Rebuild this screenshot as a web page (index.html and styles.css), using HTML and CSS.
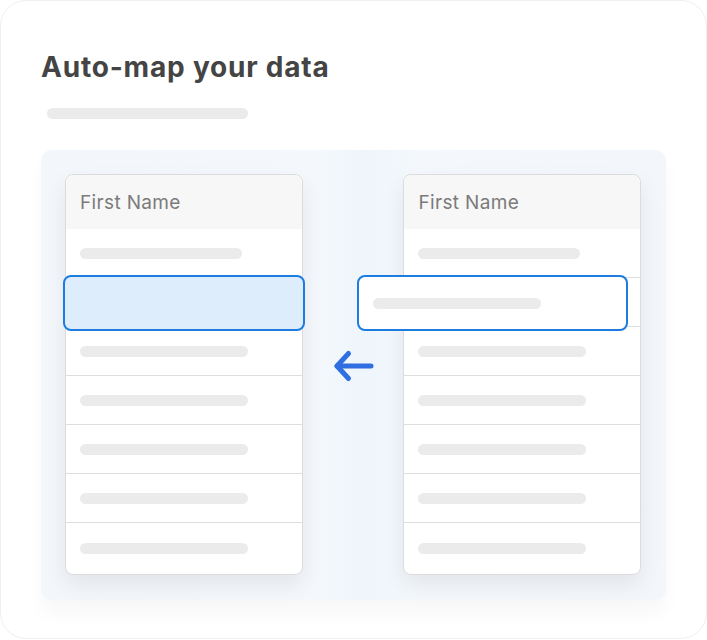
FILE: index.html
```html
<!DOCTYPE html>
<html lang="en">
<head>
<meta charset="utf-8">
<title>Auto-map your data</title>
<link rel="stylesheet" href="styles.css">
</head>
<body>
<div class="card">
  <h1 class="title">Auto-map your data</h1>
  <div class="subtitle-bar"></div>
  <div class="panel">
    <div class="table table-left">
      <div class="thead">First Name</div>
      <div class="row"><span class="bar bar-short"></span></div>
      <div class="row"></div>
      <div class="row"><span class="bar"></span></div>
      <div class="row"><span class="bar"></span></div>
      <div class="row"><span class="bar"></span></div>
      <div class="row"><span class="bar"></span></div>
      <div class="row row-last"><span class="bar"></span></div>
      <div class="drop-target"></div>
    </div>
    <div class="arrow">
      <svg width="42" height="34" viewBox="0 0 42 34" fill="none" stroke="#2f6fe2" stroke-width="5" stroke-linecap="round" stroke-linejoin="round">
        <path d="M38 17H4"/>
        <path d="M15.5 4.5L4 17L15.5 29.5"/>
      </svg>
    </div>
    <div class="table table-right">
      <div class="thead">First Name</div>
      <div class="row"><span class="bar bar-short"></span></div>
      <div class="row"></div>
      <div class="row"><span class="bar"></span></div>
      <div class="row"><span class="bar"></span></div>
      <div class="row"><span class="bar"></span></div>
      <div class="row"><span class="bar"></span></div>
      <div class="row row-last"><span class="bar"></span></div>
      <div class="dragged"><span class="bar"></span></div>
    </div>
  </div>
</div>
</body>
</html>
```

FILE: styles.css
```css
* { box-sizing: border-box; }
html, body { margin: 0; padding: 0; background: #ffffff; }
body { font-family: Inter, "Noto Sans", "Liberation Sans", sans-serif; }

.card {
  width: 707px;
  height: 639px;
  border: 1px solid #efefef;
  border-radius: 26px;
  background: #ffffff;
  padding: 47px 40px 0 40px;
}

.title {
  margin: 0;
  font-size: 28px;
  line-height: 38px;
  font-weight: 700;
  color: #444444;
  letter-spacing: 0.8px;
}

.subtitle-bar {
  margin: 22px 0 0 6px;
  width: 201px;
  height: 11px;
  border-radius: 6px;
  background: #ebebeb;
}

.panel {
  margin-top: 31px;
  width: 625px;
  height: 450px;
  border-radius: 10px;
  background: linear-gradient(90deg, #f3f7fc 0%, #f4f8fc 45%, #eef5fc 52%, #f4f8fc 60%, #f3f7fb 100%);
  box-shadow: 0 14px 18px rgba(0, 0, 0, 0.03);
  padding: 24px 25px 0 24px;
  display: flex;
  align-items: flex-start;
}

.table {
  position: relative;
  width: 238px;
  border: 1px solid #dcdcdc;
  border-radius: 8px;
  background: #ffffff;
  box-shadow: 0 10px 22px rgba(0, 0, 0, 0.075);
}

.thead {
  height: 54px;
  background: #f7f7f7;
  border-radius: 8px 8px 0 0;
  padding: 0 14px;
  display: flex;
  align-items: center;
  font-size: 19px;
  letter-spacing: 0.35px;
  color: #7b7b7b;
}

.row {
  height: 49px;
  border-top: 1px solid #dedede;
  padding: 0 14px;
  display: flex;
  align-items: center;
}
.row:nth-child(2) { border-top: none; height: 48px; }
.row-last { height: 52px; border-radius: 0 0 8px 8px; }

.bar {
  display: block;
  width: 168px;
  height: 11px;
  border-radius: 6px;
  background: #ebebeb;
}
.bar-short { width: 162px; }

.drop-target {
  position: absolute;
  left: -3px;
  top: 100px;
  width: 242px;
  height: 56px;
  border: 2px solid #1c7ce0;
  border-radius: 8px;
  background: #deedfc;
}

.dragged {
  position: absolute;
  left: -47px;
  top: 100px;
  width: 271px;
  height: 56px;
  border: 2px solid #1c7ce0;
  border-radius: 8px;
  background: #ffffff;
  padding: 0 14px;
  display: flex;
  align-items: center;
}

.arrow {
  width: 101px;
  margin-top: 175px;
  display: flex;
  justify-content: center;
  padding-left: 1px;
}
.arrow svg { display: block; }
```
